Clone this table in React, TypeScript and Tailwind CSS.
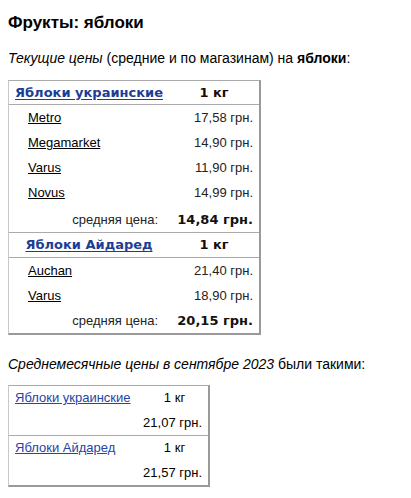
import React from 'react';

const ukr = [
  { shop: 'Metro', price: '17,58 грн.' },
  { shop: 'Megamarket', price: '14,90 грн.' },
  { shop: 'Varus', price: '11,90 грн.' },
  { shop: 'Novus', price: '14,99 грн.' },
];

const aid = [
  { shop: 'Auchan', price: '21,40 грн.' },
  { shop: 'Varus', price: '18,90 грн.' },
];

const verdana = "font-['DejaVu_Sans',Verdana,sans-serif]";

function Header({ name, h }: { name: string; h: string }) {
  return (
    <div className={`flex ${h} border-b border-[#aaa] ${verdana} font-bold text-[13px]`}>
      <div className="w-[160px] flex items-center justify-center">
        <a href="#" className="text-[#1d3d95] underline underline-offset-2">{name}</a>
      </div>
      <div className="w-[90px] flex items-center justify-center text-[#1a0a0a]">1 кг</div>
    </div>
  );
}

function ShopRow({ shop, price }: { shop: string; price: string }) {
  return (
    <div className="flex h-[25px] text-[13px]">
      <div className="w-[160px] flex items-center pl-[19px]">
        <a href="#" className="text-black underline">{shop}</a>
      </div>
      <div className="w-[90px] flex items-center justify-end pr-[6px] text-[#222] whitespace-nowrap">{price}</div>
    </div>
  );
}

function AvgRow({ price, h, border }: { price: string; h: string; border?: boolean }) {
  return (
    <div className={`flex ${h} ${border ? 'border-b border-[#aaa]' : ''}`}>
      <div className="w-[160px] flex items-center justify-end pr-[11px] text-[13px] text-[#222] whitespace-nowrap">средняя цена:</div>
      <div className={`w-[90px] flex items-center justify-end pr-[6px] ${verdana} font-bold text-[13px] text-[#111] whitespace-nowrap`}>{price}</div>
    </div>
  );
}

export default function App() {
  return (
    <div className="min-h-[498px] bg-white p-2 font-['Liberation_Sans',Arial,sans-serif] text-black">
      <h1 className="mt-[4px] text-[17px] font-bold leading-[22px]">Фрукты: яблоки</h1>
      <p className="mt-[15px] text-[14px] leading-[18px]">
        <i>Текущие цены</i> (средние и по магазинам) на <b>яблоки</b>:
      </p>

      {/* Current prices */}
      <div className="mt-[13px] w-[253px] border-t border-l border-t-[#aaa] border-l-[#c8c8c8] border-r-2 border-b-2 border-r-[#999] border-b-[#999]">
        <Header name="Яблоки украинские" h="h-[24px]" />
        {ukr.map((r) => (
          <ShopRow key={r.shop} shop={r.shop} price={r.price} />
        ))}
        <AvgRow price="14,84 грн." h="h-[28px] pt-[2px]" border />
        <Header name="Яблоки Айдаред" h="h-[25px]" />
        {aid.map((r) => (
          <ShopRow key={r.shop} shop={r.shop} price={r.price} />
        ))}
        <AvgRow price="20,15 грн." h="h-[25px]" />
      </div>

      <p className="mt-[20px] text-[14px] leading-[18px]">
        <i>Среднемесячные цены в сентябре 2023</i> были такими:
      </p>

      {/* Monthly averages */}
      <div className="mt-[12px] w-[202px] border-t border-l border-t-[#aaa] border-l-[#c8c8c8] border-r-2 border-b-2 border-r-[#999] border-b-[#999] text-[13px]">
        <div className="flex h-[24px]">
          <div className="w-[132px] flex items-center pl-[6px]">
            <a href="#" className="text-[#2346a6] underline">Яблоки украинские</a>
          </div>
          <div className="w-[67px] flex items-center justify-center">1 кг</div>
        </div>
        <div className="flex h-[26px] border-b border-[#aaa]">
          <div className="w-[132px]" />
          <div className="w-[67px] flex items-center justify-end pr-[6px] whitespace-nowrap">21,07 грн.</div>
        </div>
        <div className="flex h-[24px]">
          <div className="w-[132px] flex items-center pl-[6px]">
            <a href="#" className="text-[#2346a6] underline">Яблоки Айдаред</a>
          </div>
          <div className="w-[67px] flex items-center justify-center">1 кг</div>
        </div>
        <div className="flex h-[25px]">
          <div className="w-[132px]" />
          <div className="w-[67px] flex items-center justify-end pr-[6px] whitespace-nowrap">21,57 грн.</div>
        </div>
      </div>
    </div>
  );
}
